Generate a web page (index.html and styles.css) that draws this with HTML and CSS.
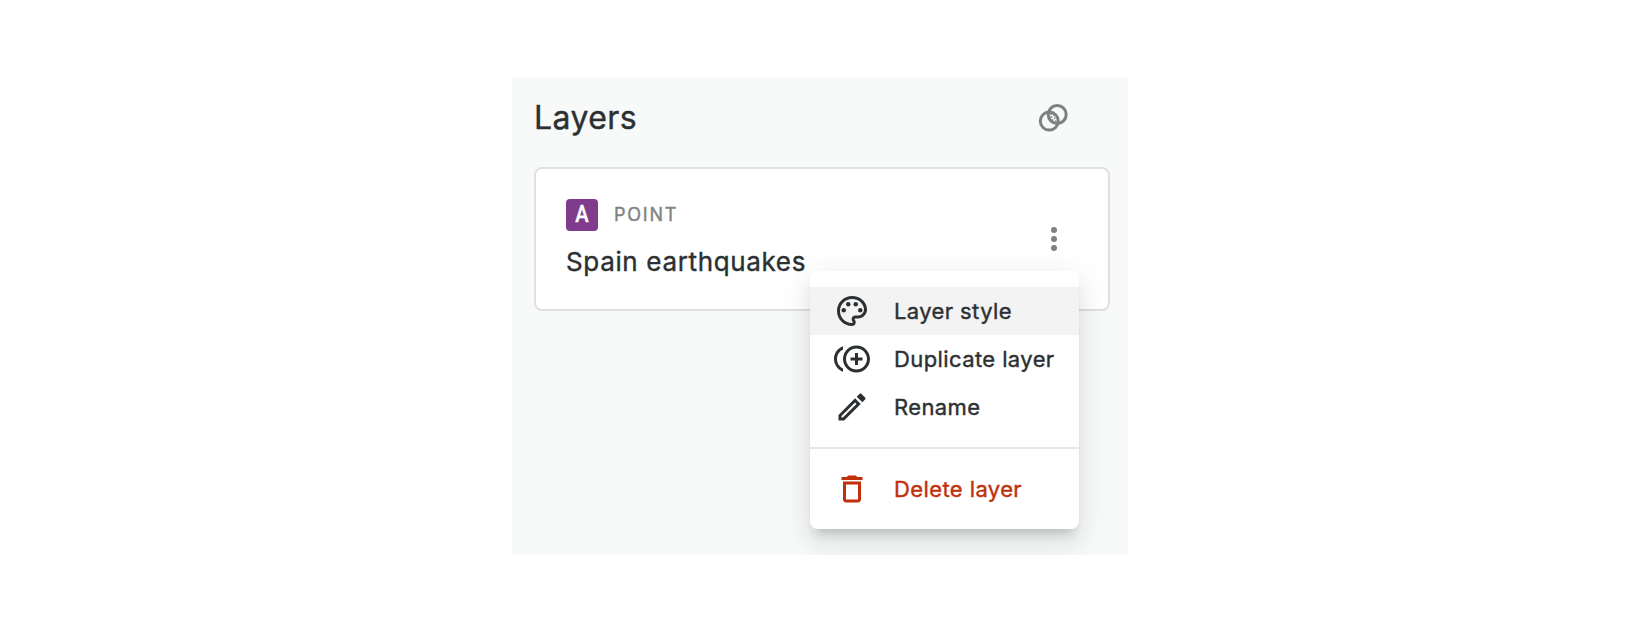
FILE: index.html
```html
<!DOCTYPE html>
<html lang="en">
<head>
<meta charset="utf-8">
<title>Layers</title>
<link rel="stylesheet" href="styles.css">
</head>
<body>
<section class="panel">
  <header class="panel-header">
    <h1 class="title">Layers</h1>
    <svg class="blend-icon" width="36" height="36" viewBox="0 0 36 36">
      <g fill="none" stroke="#7f8080" stroke-width="3"><circle cx="13.3" cy="21.1" r="9"/><circle cx="21.2" cy="14.5" r="9"/></g>
      <path d="M14 13h2v2h-2zM17 14h2v2h-2zM14.5 16h2v2h-2zM18 17h1.5v2H18zM16 19h1.5v2H16zM19 20h1.5v2H19z" fill="#7f8080" fill-opacity=".7"/>
    </svg>
  </header>
  <article class="card">
    <div class="card-text">
      <div class="kind"><span class="badge"><span class="badge-letter">A</span></span><span class="kind-name">POINT</span></div>
      <h2 class="layer-name">Spain earthquakes</h2>
    </div>
    <svg class="more-icon" width="36" height="36" viewBox="0 0 24 24" fill="#7f8080"><circle cx="12" cy="6" r="2"/><circle cx="12" cy="12" r="2"/><circle cx="12" cy="18" r="2"/></svg>
    <div class="menu">
      <div class="item selected"><svg class="icon" viewBox="0 0 24 24"><path d="M12 22C6.49 22 2 17.51 2 12S6.49 2 12 2s10 4.04 10 9c0 3.31-2.69 6-6 6h-1.77c-.28 0-.5.22-.5.5 0 .12.05.23.13.33.41.47.64 1.06.64 1.67 0 1.38-1.12 2.5-2.5 2.5zm0-18c-4.41 0-8 3.59-8 8s3.59 8 8 8c.28 0 .5-.22.5-.5 0-.16-.08-.28-.14-.35-.41-.46-.63-1.05-.63-1.65 0-1.38 1.12-2.5 2.5-2.5H16c2.21 0 4-1.79 4-4 0-3.86-3.59-7-8-7z"/><circle cx="6.5" cy="11.5" r="1.5"/><circle cx="9.5" cy="7.5" r="1.5"/><circle cx="14.5" cy="7.5" r="1.5"/><circle cx="17.5" cy="11.5" r="1.5"/></svg><span>Layer style</span></div>
      <div class="item"><svg class="icon" viewBox="0 0 24 24"><path d="M16 8h-2v3h-3v2h3v3h2v-3h3v-2h-3zM2 12c0-2.79 1.64-5.2 4.01-6.32V3.52C2.52 4.76 0 8.09 0 12s2.52 7.24 6.01 8.48v-2.16C3.64 17.2 2 14.79 2 12zm13-9c-4.96 0-9 4.04-9 9s4.04 9 9 9 9-4.04 9-9-4.04-9-9-9zm0 16c-3.86 0-7-3.14-7-7s3.14-7 7-7 7 3.14 7 7-3.14 7-7 7z"/></svg><span>Duplicate layer</span></div>
      <div class="item"><svg class="icon" viewBox="0 0 24 24"><path d="M3 17.25V21h3.75L17.81 9.94l-3.75-3.75L3 17.25zM5.92 19H5v-.92l9.06-9.06.92.92L5.92 19zM20.71 5.63l-2.34-2.34c-.2-.2-.45-.29-.71-.29s-.51.1-.7.29l-1.83 1.83 3.75 3.75 1.83-1.83c.39-.39.39-1.02 0-1.41z"/></svg><span>Rename</span></div>
      <hr class="divider">
      <div class="item danger"><svg class="icon" viewBox="0 0 24 24"><path d="M16 9v10H8V9h8m-1.5-6h-5l-1 1H5v2h14V4h-3.5l-1-1zM18 7H6v12c0 1.1.9 2 2 2h8c1.1 0 2-.9 2-2V7z"/></svg><span>Delete layer</span></div>
    </div>
  </article>
</section>
</body>
</html>
```

FILE: styles.css
```css
* { box-sizing: border-box; }
body {
  margin: 0;
  padding-top: 77px;
  height: 634px;
  background: #fff;
  color: #2c3032;
  font-family: Inter, "Liberation Sans", sans-serif;
  -webkit-text-stroke: .4px currentColor;
}
.panel {
  width: 616px;
  height: 478px;
  margin: 0 auto;
  padding: 0 18px 0 22px;
  background: #f8faf9;
  overflow: hidden;
}
.panel-header {
  display: flex;
  align-items: center;
  justify-content: space-between;
  height: 90px;
  padding: 0 38px 8px 0;
}
.title { margin: 0; font-size: 32px; line-height: 40px; font-weight: 400; letter-spacing: .4px; }
.card {
  position: relative;
  display: flex;
  justify-content: space-between;
  height: 144px;
  padding: 30px 36px 0 30px;
  background: #fff;
  border: 2px solid #e0e0e0;
  border-radius: 8px;
}
.kind { display: flex; align-items: center; gap: 16px; height: 32px; }
.badge {
  width: 32px;
  height: 32px;
  border-radius: 4px;
  background: #7f3c8d;
  color: #fff;
  font: 500 24px/31px Roboto, sans-serif;
  text-align: center;
}
.badge-letter { display: block; transform: scaleX(.84); }
.kind-name { color: #828383; font-size: 18px; font-weight: 400; line-height: 32px; letter-spacing: 1.8px; }
.layer-name { margin: 13px 0 0; font-size: 26px; line-height: 36px; font-weight: 400; letter-spacing: .65px; white-space: nowrap; }
.more-icon { margin-top: 22px; }
.menu {
  position: absolute;
  left: 274px;
  top: 102px;
  width: 269px;
  padding: 16px 0;
  background: #fff;
  border-radius: 8px;
  box-shadow: 0 10px 10px -6px rgba(44,48,50,.2), 0 16px 20px 2px rgba(44,48,50,.06), 0 6px 28px 4px rgba(44,48,50,.08);
}
.item {
  display: flex;
  align-items: center;
  gap: 24px;
  height: 48px;
  padding-left: 24px;
  font-size: 22px;
  font-weight: 400;
  letter-spacing: .4px;
  white-space: nowrap;
}
.selected { background: #f3f3f3; }
.icon { width: 36px; height: 36px; fill: currentColor; }
.divider { height: 2px; margin: 16px 0; border: 0; background: #e6e6e6; }
.danger { color: #c1300b; }
```
